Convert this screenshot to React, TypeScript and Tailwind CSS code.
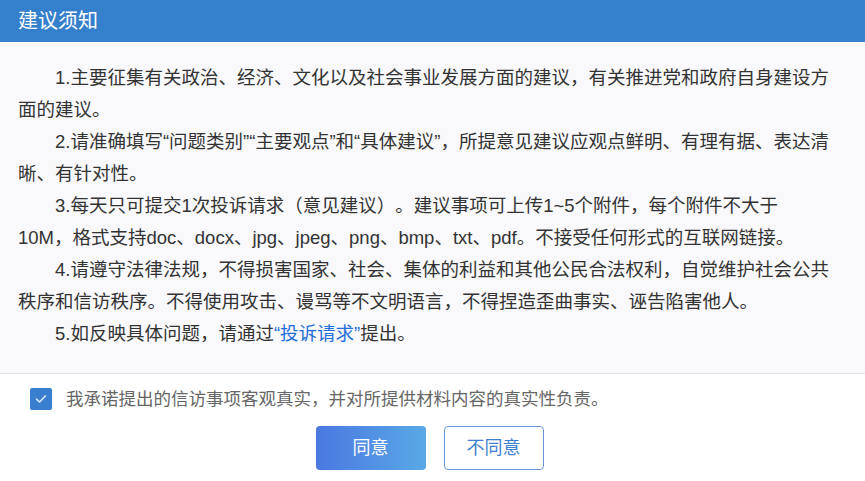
import React, { useState } from 'react';

const font = { fontFamily: '"Liberation Sans", "Noto Sans CJK SC", sans-serif' };

export default function App() {
  const [checked, setChecked] = useState(true);

  return (
    <div className="w-[865px] h-[481px] flex flex-col bg-white text-[#333] [text-spacing-trim:space-all]" style={font}>
      {/* Header */}
      <div className="h-[42px] shrink-0 bg-[#3580cc] flex items-center px-[18px]">
        <span className="text-white text-[20px] leading-none">建议须知</span>
      </div>

      {/* Notice body */}
      <div className="bg-[#f9f9fb] pl-[18px] pr-[28px] pt-[20px] pb-[23px] border-b border-[#e4e4e8] text-[18.5px] leading-[32px]">
        <p className="indent-[2em]">
          1.主要征集有关政治、经济、文化以及社会事业发展方面的建议，有关推进党和政府自身建设方面的建议。
        </p>
        <p className="indent-[2em]">
          2.请准确填写“问题类别”“主要观点”和“具体建议”，所提意见建议应观点鲜明、有理有据、表达清晰、有针对性。
        </p>
        <p className="indent-[2em]">
          3.每天只可提交1次投诉请求（意见建议）。建议事项可上传1~5个附件，每个附件不大于
          <br />
          10M，格式支持doc、docx、jpg、jpeg、png、bmp、txt、pdf。不接受任何形式的互联网链接。
        </p>
        <p className="indent-[2em]">
          4.请遵守法律法规，不得损害国家、社会、集体的利益和其他公民合法权利，自觉维护社会公共秩序和信访秩序。不得使用攻击、谩骂等不文明语言，不得捏造歪曲事实、诬告陷害他人。
        </p>
        <p className="indent-[2em]">
          5.如反映具体问题，请通过<a className="text-[#1e6fd9] cursor-pointer">“投诉请求”</a>提出。
        </p>
      </div>

      {/* Footer */}
      <div className="flex-1 flex flex-col items-center">
        <label className="self-stretch flex items-center gap-[14px] pl-[30px] pt-[13px] cursor-pointer">
          <span
            onClick={() => setChecked(!checked)}
            className={`w-[22px] h-[22px] rounded-[2px] flex items-center justify-center ${checked ? 'bg-[#3a7fcf]' : 'border border-[#bbb] bg-white'}`}
          >
            {checked && (
              <svg width="14" height="14" viewBox="0 0 14 14" fill="none">
                <path d="M2.5 7.2 L5.6 10 L11.5 3.8" stroke="#dcecff" strokeWidth="1.6" strokeLinecap="round" strokeLinejoin="round" />
              </svg>
            )}
          </span>
          <span className="text-[17.5px] text-[#666] leading-[24px]">我承诺提出的信访事项客观真实，并对所提供材料内容的真实性负责。</span>
        </label>

        <div className="flex gap-[18px] mt-[15px] pr-[6px]">
          <button className="w-[110px] h-[44px] rounded-[4px] bg-gradient-to-r from-[#4a78e0] to-[#5aa8e6] text-white text-[18px]">
            同意
          </button>
          <button className="w-[100px] h-[44px] rounded-[4px] border border-[#6b96d6] bg-white text-[#3d7fd0] text-[18px]">
            不同意
          </button>
        </div>
      </div>
    </div>
  );
}
